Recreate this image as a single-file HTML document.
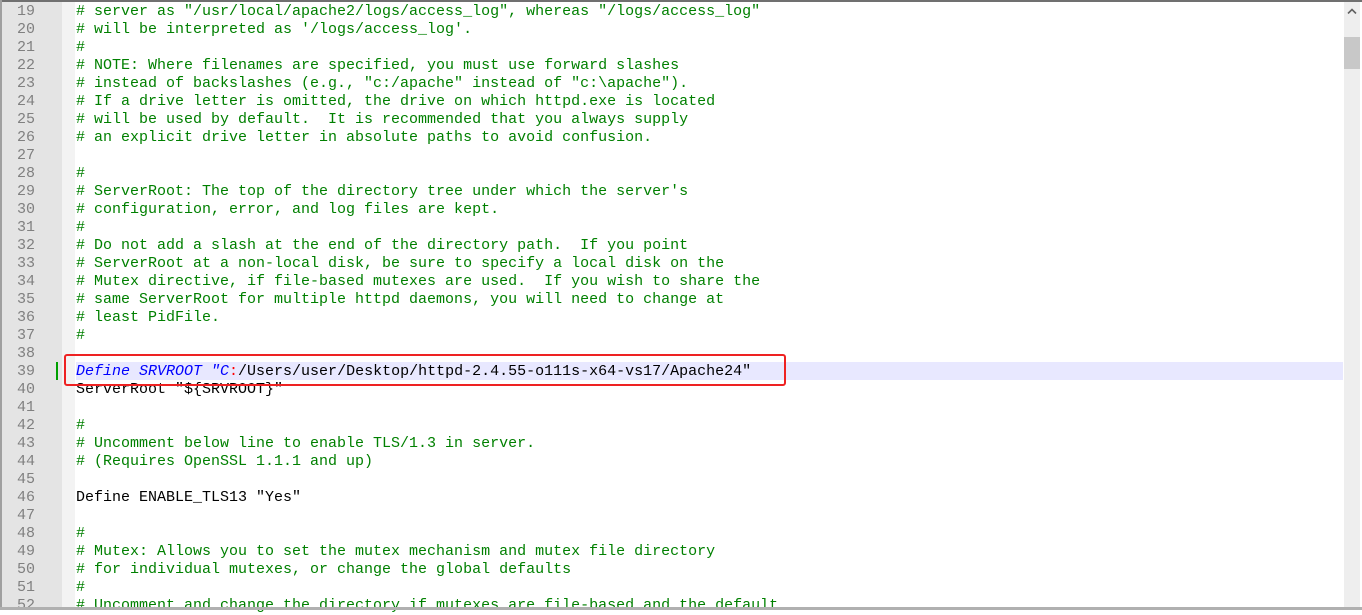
<!DOCTYPE html>
<html><head><meta charset="utf-8"><style>
html,body{margin:0;padding:0;}
body{width:1362px;height:610px;overflow:hidden;background:#fff;position:relative;font-family:"Liberation Mono",monospace;font-size:15px;}
#top{position:absolute;left:0;top:0;width:1362px;height:2px;background:#707070;}
#lb{position:absolute;left:0;top:0;width:2px;height:610px;background:#a0a0a0;}
#bb{position:absolute;left:0;top:607px;width:1362px;height:3px;background:#b0b0b0;}
#num{position:absolute;left:2px;top:2px;width:60px;height:606px;background:#e4e4e4;}
#fold{position:absolute;left:62px;top:2px;width:13px;height:606px;background:#f3f3f3;}
#hl{position:absolute;left:76px;top:362px;width:1267px;height:18px;background:#e8e8ff;}
#mark{position:absolute;left:56px;top:362px;width:2px;height:18px;background:#00a000;}
.l{position:absolute;left:0;height:18px;line-height:18px;white-space:pre;margin-top:2px;}
.n{position:absolute;left:2px;width:33px;text-align:right;color:#808080;}
.t{position:absolute;left:76px;color:#008000;}
.k{color:#0000ff;font-style:italic;}
.r{color:#ff0000;}
.b{color:#000;}
#box{position:absolute;left:64px;top:354px;width:718px;height:28px;border:2px solid #ee2222;border-radius:3px;}
#sb{position:absolute;left:1344px;top:2px;width:16px;height:605px;background:#eeeeee;}
#th{position:absolute;left:1344px;top:37px;width:16px;height:32px;background:#c8c8c8;}
#ar{position:absolute;left:1347px;top:8px;}
</style></head><body>
<div id="num"></div><div id="fold"></div><div id="hl"></div><div id="mark"></div>
<div class="l n" style="top:1px">19</div><div class="l t" style="top:1px"># server as "/usr/local/apache2/logs/access_log", whereas "/logs/access_log"</div>
<div class="l n" style="top:19px">20</div><div class="l t" style="top:19px"># will be interpreted as '/logs/access_log'.</div>
<div class="l n" style="top:37px">21</div><div class="l t" style="top:37px">#</div>
<div class="l n" style="top:55px">22</div><div class="l t" style="top:55px"># NOTE: Where filenames are specified, you must use forward slashes</div>
<div class="l n" style="top:73px">23</div><div class="l t" style="top:73px"># instead of backslashes (e.g., "c:/apache" instead of "c:\apache").</div>
<div class="l n" style="top:91px">24</div><div class="l t" style="top:91px"># If a drive letter is omitted, the drive on which httpd.exe is located</div>
<div class="l n" style="top:109px">25</div><div class="l t" style="top:109px"># will be used by default.  It is recommended that you always supply</div>
<div class="l n" style="top:127px">26</div><div class="l t" style="top:127px"># an explicit drive letter in absolute paths to avoid confusion.</div>
<div class="l n" style="top:145px">27</div>
<div class="l n" style="top:163px">28</div><div class="l t" style="top:163px">#</div>
<div class="l n" style="top:181px">29</div><div class="l t" style="top:181px"># ServerRoot: The top of the directory tree under which the server's</div>
<div class="l n" style="top:199px">30</div><div class="l t" style="top:199px"># configuration, error, and log files are kept.</div>
<div class="l n" style="top:217px">31</div><div class="l t" style="top:217px">#</div>
<div class="l n" style="top:235px">32</div><div class="l t" style="top:235px"># Do not add a slash at the end of the directory path.  If you point</div>
<div class="l n" style="top:253px">33</div><div class="l t" style="top:253px"># ServerRoot at a non-local disk, be sure to specify a local disk on the</div>
<div class="l n" style="top:271px">34</div><div class="l t" style="top:271px"># Mutex directive, if file-based mutexes are used.  If you wish to share the</div>
<div class="l n" style="top:289px">35</div><div class="l t" style="top:289px"># same ServerRoot for multiple httpd daemons, you will need to change at</div>
<div class="l n" style="top:307px">36</div><div class="l t" style="top:307px"># least PidFile.</div>
<div class="l n" style="top:325px">37</div><div class="l t" style="top:325px">#</div>
<div class="l n" style="top:343px">38</div>
<div class="l n" style="top:361px">39</div><div class="l t" style="top:361px"><span class="k">Define SRVROOT "C</span><span class="r">:</span><span class="b">/Users/user/Desktop/httpd-2.4.55-o111s-x64-vs17/Apache24"</span></div>
<div class="l n" style="top:379px">40</div><div class="l t b" style="top:379px">ServerRoot "${SRVROOT}"</div>
<div class="l n" style="top:397px">41</div>
<div class="l n" style="top:415px">42</div><div class="l t" style="top:415px">#</div>
<div class="l n" style="top:433px">43</div><div class="l t" style="top:433px"># Uncomment below line to enable TLS/1.3 in server.</div>
<div class="l n" style="top:451px">44</div><div class="l t" style="top:451px"># (Requires OpenSSL 1.1.1 and up)</div>
<div class="l n" style="top:469px">45</div>
<div class="l n" style="top:487px">46</div><div class="l t b" style="top:487px">Define ENABLE_TLS13 "Yes"</div>
<div class="l n" style="top:505px">47</div>
<div class="l n" style="top:523px">48</div><div class="l t" style="top:523px">#</div>
<div class="l n" style="top:541px">49</div><div class="l t" style="top:541px"># Mutex: Allows you to set the mutex mechanism and mutex file directory</div>
<div class="l n" style="top:559px">50</div><div class="l t" style="top:559px"># for individual mutexes, or change the global defaults</div>
<div class="l n" style="top:577px">51</div><div class="l t" style="top:577px">#</div>
<div class="l n" style="top:595px">52</div><div class="l t" style="top:595px"># Uncomment and change the directory if mutexes are file-based and the default</div>
<div id="box"></div>
<div id="sb"></div><div id="th"></div>
<svg id="ar" width="10" height="6" viewBox="0 0 10 6"><path d="M1 5.5 L5 1.5 L9 5.5" stroke="#606060" stroke-width="1.6" fill="none"/></svg>
<div id="top"></div><div id="lb"></div><div id="bb"></div>
</body></html>
